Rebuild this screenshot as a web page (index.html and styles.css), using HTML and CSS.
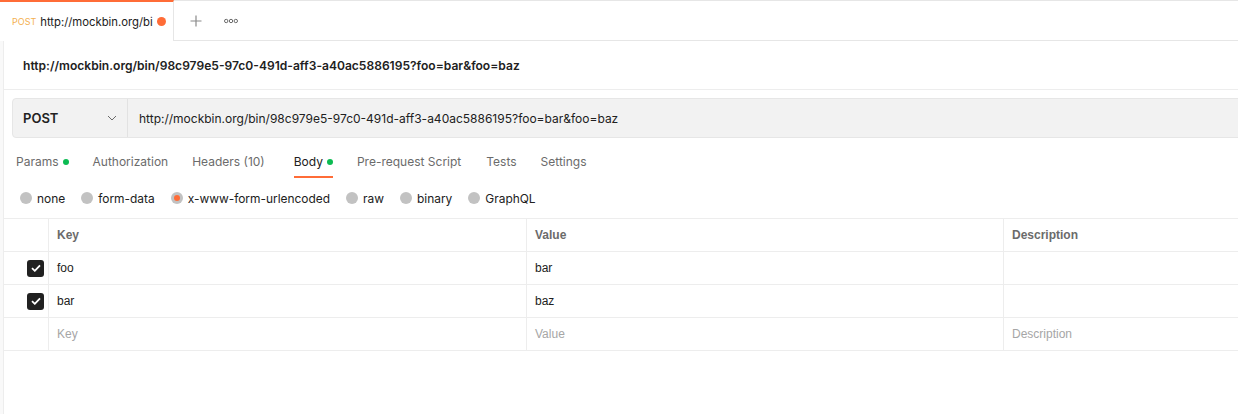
FILE: index.html
```html
<!DOCTYPE html>
<html>
<head>
<meta charset="utf-8">
<link rel="stylesheet" href="styles.css">
</head>
<body>
<div class="tabbar">
  <div class="tab active">
    <span class="tab-method">POST</span>
    <span class="tab-name">http://mockbin.org/bin/98c979e5</span>
    <span class="tab-dot"></span>
  </div>
  <div class="tab-action plus">
    <svg width="12" height="12" viewBox="0 0 12 12"><path d="M6 0.5v11M0.5 6h11" stroke="#8a8a8a" stroke-width="1.2" fill="none"/></svg>
  </div>
  <div class="tab-action more">
    <svg width="14" height="6" viewBox="0 0 14 6"><circle cx="2.2" cy="3" r="1.7" stroke="#6b6b6b" stroke-width="1" fill="none"/><circle cx="7" cy="3" r="1.7" stroke="#6b6b6b" stroke-width="1" fill="none"/><circle cx="11.8" cy="3" r="1.7" stroke="#6b6b6b" stroke-width="1" fill="none"/></svg>
  </div>
</div>
<div class="main">
  <div class="stripe"></div>
  <div class="content">
    <div class="title-row">http://mockbin.org/bin/98c979e5-97c0-491d-aff3-a40ac5886195?foo=bar&amp;foo=baz</div>
    <div class="urlbar">
      <div class="method">
        <span>POST</span>
        <svg width="10" height="6" viewBox="0 0 10 6"><path d="M1 1l4 4 4-4" stroke="#6b6b6b" stroke-width="1" fill="none"/></svg>
      </div>
      <div class="url">http://mockbin.org/bin/98c979e5-97c0-491d-aff3-a40ac5886195?foo=bar&amp;foo=baz</div>
    </div>
    <div class="req-tabs">
      <div class="req-tab">Params<span class="gdot"></span></div>
      <div class="req-tab">Authorization</div>
      <div class="req-tab">Headers (10)</div>
      <div class="req-tab selected">Body<span class="gdot"></span></div>
      <div class="req-tab">Pre-request Script</div>
      <div class="req-tab tests">Tests</div>
      <div class="req-tab">Settings</div>
    </div>
    <div class="radios">
      <div class="radio"><span class="circle"></span>none</div>
      <div class="radio"><span class="circle"></span>form-data</div>
      <div class="radio"><span class="circle on"></span>x-www-form-urlencoded</div>
      <div class="radio"><span class="circle"></span>raw</div>
      <div class="radio"><span class="circle"></span>binary</div>
      <div class="radio"><span class="circle"></span>GraphQL</div>
    </div>
    <div class="table">
      <div class="row head">
        <div class="cell chk"></div>
        <div class="cell">Key</div>
        <div class="cell">Value</div>
        <div class="cell last">Description</div>
      </div>
      <div class="row">
        <div class="cell chk"><span class="box"><svg width="10" height="8" viewBox="0 0 10 8"><path d="M1 4.2l2.8 2.6L9 1.3" stroke="#fff" stroke-width="1.8" fill="none"/></svg></span></div>
        <div class="cell">foo</div>
        <div class="cell">bar</div>
        <div class="cell last"></div>
      </div>
      <div class="row">
        <div class="cell chk"><span class="box"><svg width="10" height="8" viewBox="0 0 10 8"><path d="M1 4.2l2.8 2.6L9 1.3" stroke="#fff" stroke-width="1.8" fill="none"/></svg></span></div>
        <div class="cell">bar</div>
        <div class="cell">baz</div>
        <div class="cell last"></div>
      </div>
      <div class="row ph">
        <div class="cell chk"></div>
        <div class="cell">Key</div>
        <div class="cell">Value</div>
        <div class="cell last">Description</div>
      </div>
    </div>
  </div>
</div>
</body>
</html>
```
FILE: styles.css
```css
html, body {
  margin: 0;
  padding: 0;
  background: #fff;
  width: 1238px;
  height: 414px;
  overflow: hidden;
  font-family: Inter, "Noto Sans", sans-serif;
  color: #212121;
}

.tabbar {
  display: flex;
  align-items: stretch;
  border-top: 1px solid #e6e6e6;
  border-bottom: 1px solid #e6e6e6;
  box-sizing: border-box;
  height: 41px;
}

.tab {
  display: flex;
  align-items: center;
  width: 174px;
  box-sizing: border-box;
  padding: 0 0 0 12px;
  border-right: 1px solid #e6e6e6;
  background: #fff;
  margin-top: -1px;
  border-top: 2px solid #ff6c37;
  margin-bottom: -1px;
}

.tab-method {
  font-size: 9px;
  color: #f4b050;
  margin-right: 4px;
}

.tab-name {
  font-size: 11.3px;
  color: #212121;
  width: 113px;
  white-space: nowrap;
  overflow: hidden;
}

.tab-dot {
  width: 9px;
  height: 9px;
  border-radius: 50%;
  background: #ff6c37;
  margin-left: 4px;
}

.tab-action {
  display: flex;
  align-items: center;
  justify-content: center;
}

.plus {
  width: 44px;
}

.more {
  width: 26px;
}

.main {
  display: flex;
  height: 373px;
}

.stripe {
  width: 3px;
  background: #f9f9f9;
  border-right: 1px solid #ededed;
  flex: none;
}

.content {
  flex: 1;
  min-width: 0;
  overflow: hidden;
}

.title-row {
  height: 48px;
  display: flex;
  align-items: center;
  padding-left: 19px;
  border-bottom: 1px solid #ededed;
  font-size: 12.07px;
  font-weight: 600;
  color: #212121;
  white-space: nowrap;
}

.urlbar {
  display: flex;
  height: 40px;
  box-sizing: border-box;
  margin: 8px -10px 0 8px;
  background: #f2f2f2;
  border: 1px solid #e6e6e6;
  border-radius: 4px;
}

.method {
  width: 115px;
  box-sizing: border-box;
  display: flex;
  align-items: center;
  justify-content: space-between;
  padding: 0 10px 0 10px;
  border-right: 1px solid #e2e2e2;
  font-size: 13px;
  font-weight: 600;
}

.url {
  display: flex;
  align-items: center;
  padding-left: 11px;
  font-size: 12px;
  color: #212121;
  white-space: nowrap;
}

.req-tabs {
  display: flex;
  gap: 24px;
  padding-left: 12px;
  height: 40px;
}

.req-tab {
  display: flex;
  align-items: center;
  font-size: 12px;
  color: #6b6b6b;
  box-sizing: border-box;
  padding-top: 9px;
  border-bottom: 2px solid transparent;
}

.req-tab.selected {
  color: #212121;
  border-bottom-color: #ff6c37;
  margin-left: 5px;
}

.req-tab.tests {
  margin-left: 1px;
}

.gdot {
  width: 6px;
  height: 6px;
  border-radius: 50%;
  background: #0cbb52;
  margin-left: 4px;
}

.radios {
  display: flex;
  align-items: center;
  gap: 16px;
  padding-left: 16px;
  height: 40px;
}

.radio {
  display: flex;
  align-items: center;
  gap: 5px;
  font-size: 11.93px;
  color: #212121;
}

.circle {
  width: 12px;
  height: 12px;
  border-radius: 50%;
  background: #c2c2c2;
  display: flex;
  align-items: center;
  justify-content: center;
}

.circle.on::after {
  content: "";
  width: 6px;
  height: 6px;
  border-radius: 50%;
  background: #ff6c37;
}

.table {
  border-top: 1px solid #ededed;
}

.row {
  display: grid;
  grid-template-columns: 45px 478px 477px 1fr;
  height: 33px;
  border-bottom: 1px solid #ededed;
  box-sizing: border-box;
}

.cell {
  display: flex;
  align-items: center;
  padding-left: 8px;
  border-right: 1px solid #ededed;
  font-family: "Liberation Sans", Arial, sans-serif;
  font-size: 12px;
  color: #212121;
}

.cell.last {
  border-right: none;
}

.head .cell {
  font-weight: 700;
  color: #6b6b6b;
}

.ph .cell {
  color: #a6a6a6;
}

.cell.chk {
  justify-content: flex-end;
  padding: 0 4px 0 0;
}

.box {
  width: 17px;
  height: 17px;
  border-radius: 3px;
  background: #212121;
  display: flex;
  align-items: center;
  justify-content: center;
}
```
